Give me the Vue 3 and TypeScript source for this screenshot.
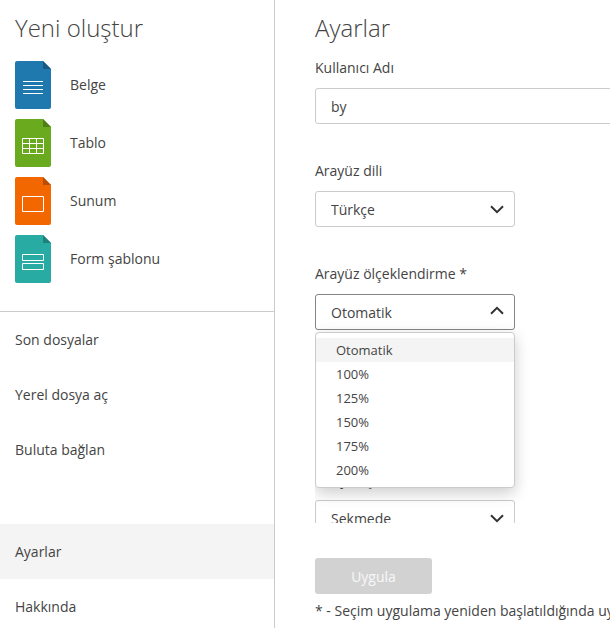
<script setup lang="ts">
import { ref } from 'vue'

interface DocType {
  kind: 'doc' | 'sheet' | 'slide' | 'form'
  label: string
  color: string
  fold: string
}

const docTypes: DocType[] = [
  { kind: 'doc', label: 'Belge', color: '#2079ae', fold: '#185a82' },
  { kind: 'sheet', label: 'Tablo', color: '#6aaa1e', fold: '#4f7f16' },
  { kind: 'slide', label: 'Sunum', color: '#f36700', fold: '#b64d00' },
  { kind: 'form', label: 'Form şablonu', color: '#27aba3', fold: '#1d807a' },
]

const topLinks: string[] = ['Son dosyalar', 'Yerel dosya aç', 'Buluta bağlan']
const bottomLinks: string[] = ['Ayarlar', 'Hakkında']
const active = ref('Ayarlar')

const userName = ref('by')
const scales: string[] = ['Otomatik', '100%', '125%', '150%', '175%', '200%']
const scale = ref('Otomatik')
const open = ref(true)

function pick(value: string): void {
  scale.value = value
  open.value = false
}
</script>

<template>
  <div class="app">
    <aside class="sidebar">
      <h1 class="title">Yeni oluştur</h1>
      <ul class="create">
        <li v-for="d in docTypes" :key="d.kind" class="create-item">
          <svg class="doc-icon" width="36" height="48" viewBox="0 0 36 48" fill="none">
            <path d="M2 0H28L36 8V46a2 2 0 0 1-2 2H2a2 2 0 0 1-2-2V2a2 2 0 0 1 2-2Z" :fill="d.color" />
            <path d="M28 0L36 8H28Z" :fill="d.fold" />
            <path v-if="d.kind === 'doc'" d="M8 20.5H28M8 24.5H28M8 28.5H28M8 32.5H28" stroke="#fff" />
            <path
              v-else-if="d.kind === 'sheet'"
              d="M7.5 19.5H28.5V34.5H7.5ZM7.5 24.5H28.5M7.5 29.5H28.5M14.5 19.5V34.5M21.5 19.5V34.5"
              stroke="#fff"
            />
            <path v-else-if="d.kind === 'slide'" d="M7.5 19.5H28.5V34.5H7.5Z" stroke="#fff" />
            <path v-else d="M7.5 19.5H28.5V25.5H7.5ZM7.5 28.5H28.5V34.5H7.5Z" stroke="#fff" />
          </svg>
          <span>{{ d.label }}</span>
        </li>
      </ul>
      <nav class="links">
        <a v-for="l in topLinks" :key="l" class="link" @click="active = l">{{ l }}</a>
      </nav>
      <nav class="links-bottom">
        <a
          v-for="l in bottomLinks"
          :key="l"
          class="link"
          :class="{ active: active === l }"
          @click="active = l"
        >{{ l }}</a>
      </nav>
    </aside>

    <main class="main">
      <h1 class="title">Ayarlar</h1>
      <div class="settings">
        <div class="field">
          <label class="label">Kullanıcı Adı</label>
          <input v-model="userName" class="control input" type="text" spellcheck="false" />
        </div>
        <div class="field">
          <label class="label">Arayüz dili</label>
          <div class="control select">
            <span class="value">Türkçe</span>
            <svg class="chevron" width="14" height="9" viewBox="0 0 14 9">
              <path d="M1 1.2L7 7.2L13 1.2" />
            </svg>
          </div>
        </div>
        <div class="field scale-field">
          <label class="label">Arayüz ölçeklendirme *</label>
          <div class="control select" :class="{ open }" @click="open = !open">
            <span class="value">{{ scale }}</span>
            <svg class="chevron" width="14" height="9" viewBox="0 0 14 9">
              <path :d="open ? 'M1 7.8L7 1.8L13 7.8' : 'M1 1.2L7 7.2L13 1.2'" />
            </svg>
          </div>
          <ul v-if="open" class="menu">
            <li
              v-for="s in scales"
              :key="s"
              class="option"
              :class="{ selected: s === scale }"
              @click="pick(s)"
            >{{ s }}</li>
          </ul>
        </div>
        <div class="field">
          <label class="label">Dosya aç</label>
          <div class="control select">
            <span class="value">Sekmede</span>
            <svg class="chevron" width="14" height="9" viewBox="0 0 14 9">
              <path d="M1 1.2L7 7.2L13 1.2" />
            </svg>
          </div>
        </div>
      </div>
      <button class="apply" disabled>Uygula</button>
      <p class="note">* - Seçim uygulama yeniden başlatıldığında uygulanacaktır</p>
    </main>
  </div>
</template>

<style>
body {
  margin: 0;
  overflow: hidden;
}
</style>

<style scoped>
.app {
  display: flex;
  width: 100vw;
  height: 100vh;
  overflow: hidden;
  background: #fff;
  color: #444;
  font-family: 'Open Sans', sans-serif;
  font-size: 14px;
  line-height: 20px;
}
.sidebar {
  flex: none;
  display: flex;
  flex-direction: column;
  box-sizing: border-box;
  width: 275px;
  border-right: 1px solid #cbcbcb;
}
.title {
  margin: 0;
  padding: 11px 0 1px;
  font-size: 24px;
  font-weight: 300;
  line-height: 33px;
}
.sidebar .title {
  padding-left: 15px;
}
.create {
  display: flex;
  flex-direction: column;
  gap: 10px;
  margin: 0;
  padding: 16px 15px 28px;
  border-bottom: 1px solid #cbcbcb;
  list-style: none;
}
.create-item {
  display: flex;
  align-items: center;
  gap: 19px;
  height: 48px;
}
.doc-icon {
  flex: none;
}
.link {
  display: flex;
  align-items: center;
  height: 55px;
  padding-left: 15px;
  cursor: pointer;
}
.link.active {
  background: #f4f4f4;
}
.links-bottom {
  margin-top: auto;
  margin-bottom: -6px;
}
.main {
  flex: 1;
  min-width: 0;
  padding-left: 40px;
}
.settings {
  height: 465px;
  padding-top: 13px;
  box-sizing: content-box;
  overflow: hidden;
}
.field {
  height: 103px;
}
.label {
  display: block;
  margin-bottom: 10px;
}
.control {
  box-sizing: border-box;
  height: 36px;
  border: 1px solid #cbcbcb;
  border-radius: 3px;
  padding: 0 15px;
  background: #fff;
  color: #444;
}
.input {
  display: block;
  width: 400px;
  font: inherit;
  outline: none;
}
.select {
  display: flex;
  align-items: center;
  justify-content: space-between;
  width: 200px;
  padding-right: 10px;
}
.value {
  padding-top: 2px;
}
.select.open {
  border-color: #848484;
}
.chevron {
  fill: none;
  stroke: #333;
  stroke-width: 2;
}
.select.open .chevron {
  margin-bottom: 4px;
}
.scale-field {
  position: relative;
  height: 206px;
}
.menu {
  position: absolute;
  z-index: 2;
  top: 68px;
  left: 0;
  box-sizing: border-box;
  width: 200px;
  height: 156px;
  margin: 0;
  padding: 5px 0;
  border: 1px solid #cbcbcb;
  border-radius: 4px;
  background: #fff;
  box-shadow: 0 5px 15px rgba(0, 0, 0, 0.2);
  list-style: none;
  font-size: 13px;
}
.option {
  height: 24px;
  padding-left: 20px;
  line-height: 24px;
}
.option.selected {
  background: #f4f4f4;
}
.apply {
  display: block;
  width: 117px;
  height: 36px;
  margin: 35px 0 0;
  padding: 2px 0 0;
  border: 0;
  border-radius: 3px;
  background: #d2d2d2;
  color: #f8f8f8;
  font: inherit;
}
.note {
  margin: 7px 0 0;
  white-space: nowrap;
}
</style>
